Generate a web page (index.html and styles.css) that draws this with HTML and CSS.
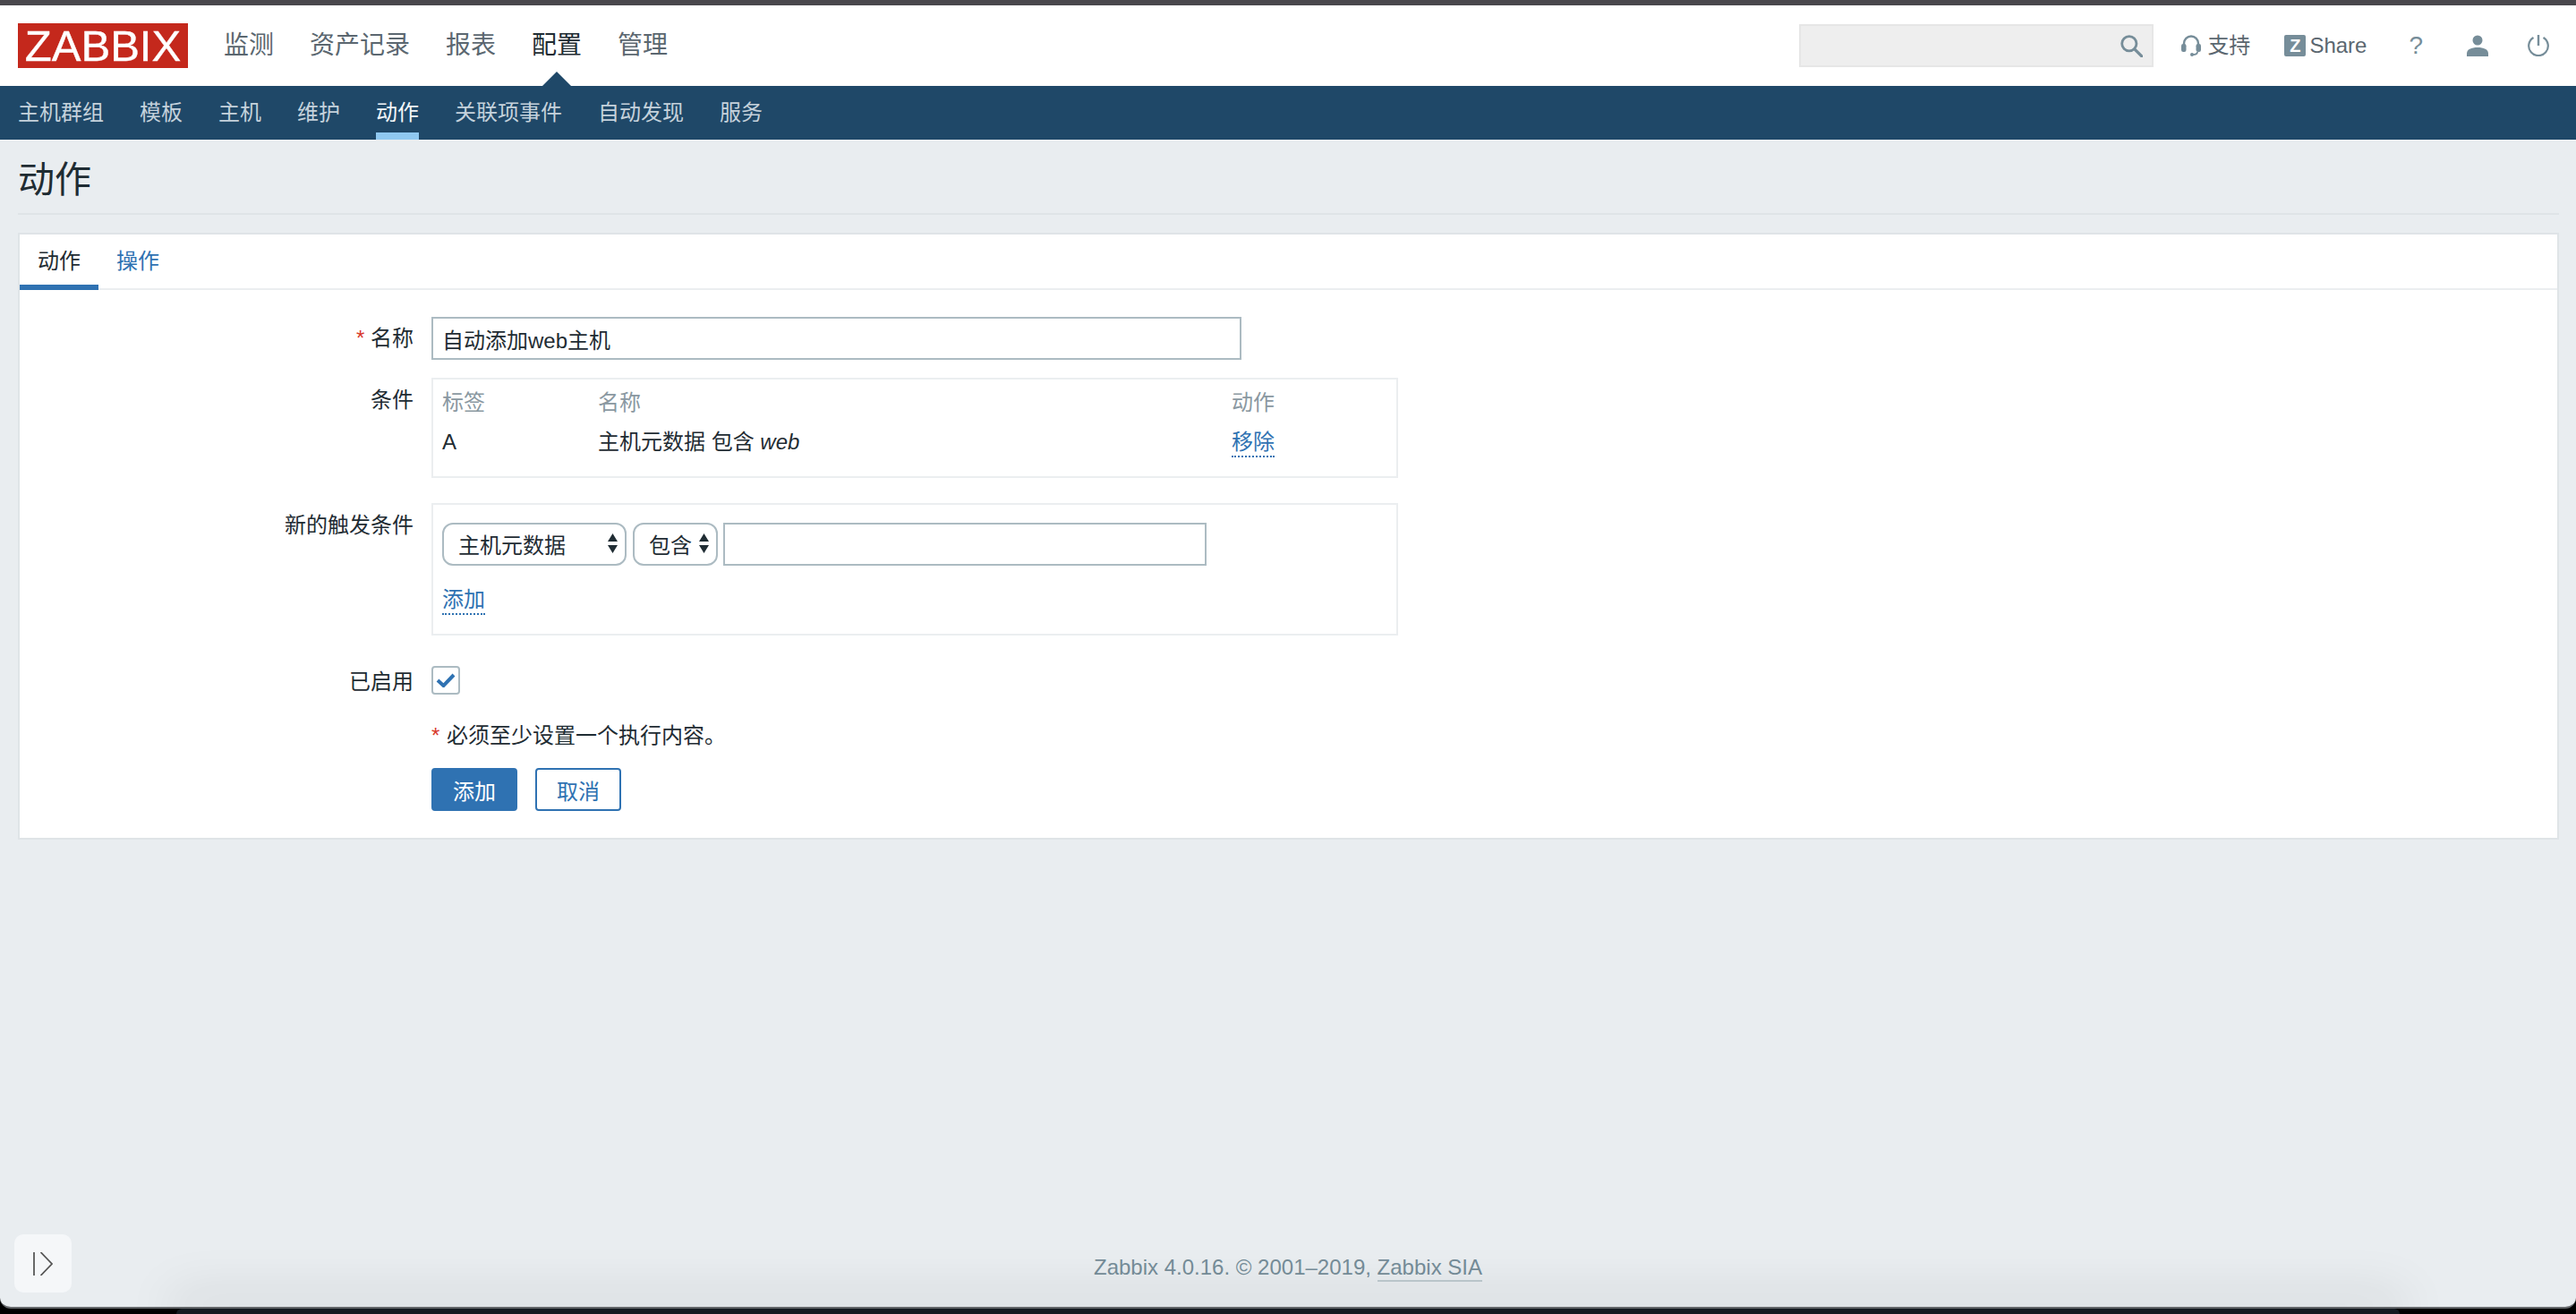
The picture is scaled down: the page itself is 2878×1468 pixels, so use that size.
FILE: index.html
```html
<!DOCTYPE html>
<html lang="zh">
<head>
<meta charset="utf-8">
<title>动作</title>
<link rel="stylesheet" href="styles.css">
</head>
<body>
<div class="window">
  <div class="topbar"></div>
  <header class="header">
    <div class="logo">ZABBIX</div>
    <nav class="menu">
      <a class="menu-item">监测</a>
      <a class="menu-item">资产记录</a>
      <a class="menu-item">报表</a>
      <a class="menu-item is-active">配置</a>
      <a class="menu-item">管理</a>
    </nav>
    <div class="tools">
      <div class="search">
        <svg class="ico" viewBox="0 0 24 24" width="26" height="26"><circle cx="10" cy="10" r="7.5" fill="none" stroke="#768d99" stroke-width="2.6"/><path d="M15.5 15.5 23 23" stroke="#768d99" stroke-width="3" stroke-linecap="round"/></svg>
      </div>
      <a class="tool tool-support">
        <svg viewBox="0 0 22 24" width="22" height="24"><path d="M3 13V9.500a8 8 0 0 1 16 0V13" fill="none" stroke="#768d99" stroke-width="2.400"/><rect x="0" y="10" width="5.500" height="9" rx="2.200" fill="#768d99"/><rect x="16.500" y="10" width="5.500" height="9" rx="2.200" fill="#768d99"/><path d="M18 19c0 2-2 3-5 3" fill="none" stroke="#768d99" stroke-width="1.800"/><circle cx="12" cy="22" r="2" fill="#768d99"/></svg>
        <span>支持</span>
      </a>
      <a class="tool tool-share">
        <span class="zbadge">Z</span>
        <span>Share</span>
      </a>
      <a class="tool tool-help">?</a>
      <a class="tool tool-user">
        <svg viewBox="0 0 24 24" width="24" height="24"><circle cx="12" cy="6" r="5.500" fill="#768d99"/><path d="M0 24v-3c0-5 5-7 12-7s12 2 12 7v3z" fill="#768d99"/></svg>
      </a>
      <a class="tool tool-power">
        <svg viewBox="0 0 24 24" width="24" height="24"><path d="M6.500 3a10.800 10.800 0 1 0 11 0" fill="none" stroke="#768d99" stroke-width="2.200"/><path d="M12 0v12" stroke="#768d99" stroke-width="2.400"/></svg>
      </a>
    </div>
  </header>
  <nav class="subnav">
    <a class="sub-item">主机群组</a>
    <a class="sub-item">模板</a>
    <a class="sub-item">主机</a>
    <a class="sub-item">维护</a>
    <a class="sub-item is-active">动作</a>
    <a class="sub-item">关联项事件</a>
    <a class="sub-item">自动发现</a>
    <a class="sub-item">服务</a>
  </nav>
  <main class="main">
    <h1 class="title">动作</h1>
    <section class="card">
      <div class="tabs">
        <a class="tab is-active">动作</a>
        <a class="tab">操作</a>
      </div>
      <form class="form">
        <div class="label"><span class="star">*</span> 名称</div>
        <div class="field"><input class="text text-name" type="text" value="自动添加web主机"></div>

        <div class="label label-box">条件</div>
        <div class="field">
          <div class="box box-cond">
            <table class="cond">
              <thead>
                <tr><th class="c1">标签</th><th class="c2">名称</th><th class="c3">动作</th></tr>
              </thead>
              <tbody>
                <tr><td>A</td><td>主机元数据 包含 <em>web</em></td><td><a class="link">移除</a></td></tr>
              </tbody>
            </table>
          </div>
        </div>

        <div class="label label-box label-spaced">新的触发条件</div>
        <div class="field field-spaced">
          <div class="box box-new">
            <div class="controls">
              <div class="select select-a">
                <span>主机元数据</span>
                <svg viewBox="0 0 11 22" width="11" height="22"><path d="M5.500 0 11 9H0zM5.500 22 0 13h11z" fill="#1f2c33"/></svg>
              </div>
              <div class="select select-b">
                <span>包含</span>
                <svg viewBox="0 0 11 22" width="11" height="22"><path d="M5.500 0 11 9H0zM5.500 22 0 13h11z" fill="#1f2c33"/></svg>
              </div>
              <input class="text text-value" type="text">
            </div>
            <div class="add-row"><a class="link">添加</a></div>
          </div>
        </div>

        <div class="label label-check">已启用</div>
        <div class="field field-check">
          <span class="check">
            <svg viewBox="0 0 22 16" width="22" height="16"><path d="M2 8l6.500 6L20 2" fill="none" stroke="#2f72b2" stroke-width="4"/></svg>
          </span>
        </div>

        <div class="field field-note"><span class="star star-note">*</span> 必须至少设置一个执行内容。</div>

        <div class="field field-buttons">
          <button class="btn btn-primary" type="button">添加</button>
          <button class="btn btn-alt" type="button">取消</button>
        </div>
      </form>
    </section>
  </main>
  <footer class="footer">Zabbix 4.0.16. © 2001–2019, <a class="footer-link">Zabbix SIA</a></footer>
  <div class="float-btn">
    <svg viewBox="0 0 22 26" width="22" height="26"><path d="M1 0v26" stroke="#444" stroke-width="1.600"/><path d="M8.500 0 21 13 8.500 26" fill="none" stroke="#555" stroke-width="1.800"/></svg>
  </div>
</div>
<div class="strip"><div class="dock"></div></div>
</body>
</html>
```

FILE: styles.css
```css
* { box-sizing: border-box; }
html, body { margin: 0; padding: 0; height: 100%; }
body {
  background: #000;
  font-family: "Liberation Sans", "Noto Sans CJK SC", sans-serif;
  font-size: 24px;
  color: #1f2c33;
  overflow: hidden;
}
a { text-decoration: none; }

.window {
  position: relative;
  height: 1462px;
  display: flex;
  flex-direction: column;
  background: #e9edf0;
  border-bottom: 2px solid #66696c;
  border-radius: 0 0 12px 12px;
  overflow: hidden;
}
.topbar { height: 6px; background: #49474c; flex: none; }

.header {
  height: 90px;
  flex: none;
  background: #fff;
  display: flex;
  align-items: flex-start;
  padding: 20px 30px 0 20px;
}
.logo {
  width: 190px;
  height: 50px;
  background: #c4281c;
  color: #fff;
  font-size: 49px;
  line-height: 50px;
  text-align: center;
  -webkit-text-stroke: 0.4px #fff;
}
.menu { display: flex; gap: 40px; margin-left: 40px; }
.menu-item {
  position: relative;
  font-size: 28px;
  line-height: 50px;
  color: #5b6770;
}
.menu-item.is-active { color: #1f2c33; }
.menu-item.is-active::after {
  content: "";
  position: absolute;
  left: 50%;
  bottom: -20px;
  margin-left: -16px;
  border-left: 16px solid transparent;
  border-right: 16px solid transparent;
  border-bottom: 16px solid #1f4868;
}

.tools { margin-left: auto; display: flex; align-items: center; height: 50px; }
.search {
  width: 396px;
  height: 48px;
  background: #eee;
  border: 2px solid #e6e6e6;
  display: flex;
  align-items: center;
  justify-content: flex-end;
  padding-right: 10px;
}
.tool {
  display: flex;
  align-items: center;
  color: #5b6770;
  line-height: 24px;
}
.tool-support { margin-left: 31px; gap: 7px; }
.tool-share { margin-left: 38px; gap: 4px; }
.zbadge {
  width: 24px;
  height: 24px;
  background: #768d99;
  color: #fff;
  font-size: 20px;
  font-weight: bold;
  line-height: 24px;
  text-align: center;
  border-radius: 2px;
}
.tool-help { margin-left: 47px; font-size: 28px; color: #768d99; }
.tool-user { margin-left: 49px; }
.tool-power { margin-left: 44px; }

.subnav {
  height: 60px;
  flex: none;
  background: #1f4868;
  display: flex;
  gap: 40px;
  padding-left: 20px;
}
.sub-item {
  position: relative;
  line-height: 60px;
  color: #c5d2dc;
}
.sub-item.is-active { color: #f2f6f9; }
.sub-item.is-active::after {
  content: "";
  position: absolute;
  left: 0;
  right: 0;
  bottom: 0;
  height: 8px;
  background: #8fc8f0;
}

.main { flex: 1; padding: 0 19px 0 20px; }
.title {
  margin: 0;
  height: 84px;
  padding-top: 24px;
  font-size: 41px;
  font-weight: normal;
  line-height: 42px;
  border-bottom: 2px solid #dfe4e7;
  color: #1f2c33;
}
.card {
  margin-top: 20px;
  background: #fff;
  border: 2px solid #dfe4e7;
}
.tabs {
  height: 62px;
  display: flex;
  border-bottom: 2px solid #ebeef0;
}
.tab {
  width: 88px;
  height: 62px;
  text-align: center;
  line-height: 60px;
  color: #2f72b2;
}
.tab.is-active {
  color: #1f2c33;
  border-bottom: 6px solid #2f72b2;
}

.form {
  display: grid;
  grid-template-columns: 440px 1fr;
  column-gap: 20px;
  row-gap: 20px;
  padding: 30px 0 30px;
}
.label { text-align: right; padding-top: 8px; line-height: 32px; }
.label-box { padding-top: 9px; }
.label-spaced, .field-spaced { margin-top: 8px; }
.label-check { margin-top: 14px; padding-top: 2px; }
.field-check { margin-top: 14px; }
.field-note, .field-buttons { grid-column: 2; }
.field-note { line-height: 32px; margin-top: 8px; }
.field-buttons { display: flex; gap: 20px; margin-top: 0; }
.star { color: #d8392b; }
.star-note { margin-right: 1px; }

.text {
  height: 48px;
  border: 2px solid #acbbc2;
  padding: 0 10px;
  font: inherit;
  color: #1f2c33;
  background: #fff;
  outline: none;
}
.text-name { width: 905px; }
.text-value { width: 540px; margin-left: 6px; }

.box { width: 1080px; border: 2px solid #ebeef0; }
.box-cond { padding: 0 10px 20px; }
.cond { width: 1056px; border-collapse: collapse; table-layout: fixed; }
.cond th, .cond td { padding: 0; text-align: left; font-weight: normal; line-height: 32px; vertical-align: middle; }
.cond th { height: 52px; color: #8a98a1; }
.cond td { height: 36px; }
.cond .c1 { width: 174px; }
.cond .c2 { width: 708px; }
.link {
  color: #2f72b2;
  display: inline-block;
  line-height: 30px;
  border-bottom: 2px dotted #2f72b2;
}

.box-new { padding: 20px 10px 21px; }
.controls { display: flex; }
.select {
  height: 48px;
  border: 2px solid #acbbc2;
  border-radius: 12px;
  display: flex;
  align-items: center;
  justify-content: space-between;
  background: #fff;
  padding-bottom: 2px;
}
.select-a { width: 206px; padding-left: 16px; padding-right: 8px; }
.select-b { width: 95px; margin-left: 7px; padding-left: 16px; padding-right: 8px; }
.add-row { margin-top: 23px; line-height: 0; }

.check {
  display: flex;
  align-items: center;
  justify-content: center;
  width: 32px;
  height: 32px;
  border: 2px solid #acbbc2;
  border-radius: 4px;
}

.btn {
  width: 96px;
  height: 48px;
  padding: 0;
  font: inherit;
  border-radius: 4px;
  border: 2px solid #2f72b2;
}
.btn-primary { background: #2f72b2; color: #fff; }
.btn-alt { background: #fff; color: #2f72b2; }

.footer {
  flex: none;
  text-align: center;
  line-height: 28px;
  padding-bottom: 28px;
  color: #768d99;
}
.footer-link { display: inline-block; color: #768d99; border-bottom: 2px solid #bfcbd0; line-height: 28px; }

.float-btn {
  position: absolute;
  left: 16px;
  top: 1379px;
  width: 64px;
  height: 65px;
  background: #f5f7f9;
  border-radius: 10px;
  display: flex;
  align-items: center;
  justify-content: center;
}

.strip {
  position: relative;
  height: 6px;
  padding: 0 197px 0 197px;
  background: #000;
}
.dock {
  height: 6px;
  background: #141a20;
  border-radius: 8px 8px 0 0;
  box-shadow: 0 -6px 56px 8px rgba(30, 30, 30, 0.14);
}
```
